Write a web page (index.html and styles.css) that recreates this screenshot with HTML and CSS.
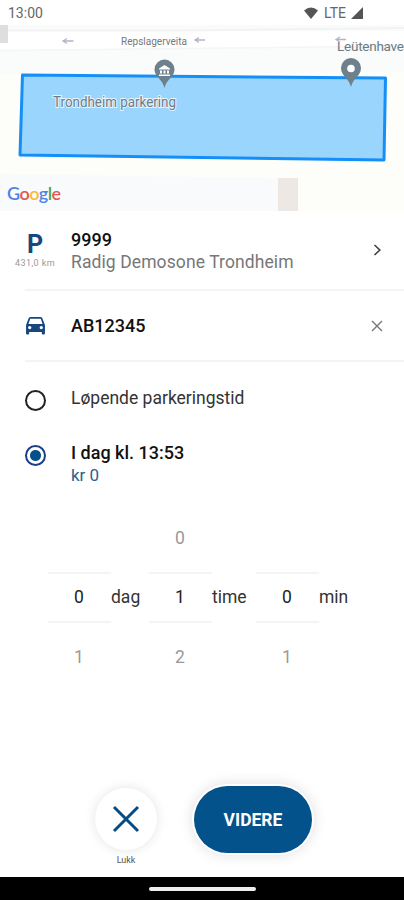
FILE: index.html
```html
<!DOCTYPE html>
<html lang="no">
<head>
  <meta charset="UTF-8" />
  <meta name="viewport" content="width=device-width, initial-scale=1.0"/>
  <title>Parkering</title>
  <link rel="stylesheet" href="styles.css">
</head>
<body>
  <div class="map">
    <svg class="map-canvas" width="404" height="211" viewBox="0 0 404 211">
      <rect width="404" height="211" fill="#fdfdf9"/>
      <path d="M0 25H404V72L0 74Z" fill="#fafbfb"/>
      <path d="M0 31H404V46L0 50Z" fill="#fff"/>
      <path d="M8 30.500H180L404 28" fill="none" stroke="#f3f3f3" stroke-width="2"/>
      <path d="M0 50.500L404 46" fill="none" stroke="#f4f5f6" stroke-width="1.500"/>
      <rect y="25" width="8" height="18" fill="#dedede"/>
      <path d="M0 174L278 178V211H0Z" fill="#f9fafb"/>
      <rect x="278" y="178" width="20" height="33" fill="#ede8e4"/>
      <path d="M22.500 75L385.500 78L384 160L20 155Z" fill="#99d5fd" stroke="#148ff8" stroke-width="3" stroke-linejoin="round"/>
      <g fill="none" stroke="#b5b5c3" stroke-width="1.300">
        <path d="M73.500 41H63M67 38.500L63 41L67 43.500"/>
        <path d="M205 40H195M199 37.500L195 40L199 42.500"/>
        <path d="M346 39.500H336M340 37L336 39.500L340 42"/>
      </g>
      <g fill="#6d808b">
        <path d="M164.500 88C162.500 79 154.500 77 154.500 69.500A10 10 0 0 1 174.500 69.500C174.500 77 166.500 79 164.500 88Z"/>
        <path d="M351 87C349 78 341 76 341 68A10 10 0 0 1 361 68C361 76 353 78 351 87Z"/>
      </g>
      <circle cx="351" cy="68.500" r="3.800" fill="#fff"/>
      <path d="M159 68.500L164.500 65L170 68.500V69.500H159ZM160 70.500H162V73.500H160ZM163.500 70.500H165.500V73.500H163.500ZM167 70.500H169V73.500H167ZM159 74.500H170V76H159Z" fill="#fff"/>
      <text class="street" x="121" y="45" textLength="66">Repslagerveita</text>
      <text class="place" x="337" y="51" textLength="67">Leütenhave</text>
      <text class="zone" x="53" y="107" textLength="123" lengthAdjust="spacingAndGlyphs">Trondheim parkering</text>
      <text class="google" x="7" y="200" textLength="54"><tspan fill="#4c82e8">G</tspan><tspan fill="#e2574c">o</tspan><tspan fill="#f5bd36">o</tspan><tspan fill="#4c82e8">g</tspan><tspan fill="#45a55c">l</tspan><tspan fill="#e2574c">e</tspan></text>
    </svg>
    <div class="status-bar">
      <span class="clock">13:00</span>
      <svg width="14" height="12" viewBox="0 0 14 12"><path d="M0 3.500Q7 -2.500 14 3.500L7 12Z" fill="#555"/></svg>
      <span class="network">LTE</span>
      <svg width="12" height="12" viewBox="0 0 12 12"><path d="M12 0V12H0Z" fill="#555"/></svg>
    </div>
  </div>

  <div class="row zone-row">
    <div class="row-icon">
      <span class="p-icon">P</span>
      <span class="distance">431,0 km</span>
    </div>
    <div class="row-text">
      <div class="title">9999</div>
      <div class="subtitle">Radig Demosone Trondheim</div>
    </div>
    <svg class="row-action" width="14" height="14" viewBox="0 0 14 14"><path d="M4.500 2L9.800 7L4.500 12" fill="none" stroke="#444" stroke-width="1.700"/></svg>
  </div>

  <div class="row car-row">
    <div class="row-icon">
      <svg width="21" height="18" viewBox="0 0 20 18" preserveAspectRatio="none"><path fill="#17477f" fill-rule="evenodd" d="M3.500 1.300Q4 0 5.500 0H14.500Q16 0 16.500 1.300L19 8V16.500Q19 17.500 18 17.500H17Q16 17.500 16 16.500V15H4V16.500Q4 17.500 3 17.500H2Q1 17.500 1 16.500V8ZM5 1.800L3.300 7H16.700L15 1.800ZM4.500 9A1.600 1.600 0 1 0 4.500 12.200A1.600 1.600 0 1 0 4.500 9ZM15.500 9A1.600 1.600 0 1 0 15.500 12.200A1.600 1.600 0 1 0 15.500 9Z"/></svg>
    </div>
    <div class="row-text title">AB12345</div>
    <svg class="row-action" width="14" height="14" viewBox="0 0 14 14"><path d="M2 2L12 12M12 2L2 12" fill="none" stroke="#777" stroke-width="1.400"/></svg>
  </div>

  <div class="options">
    <div class="option">
      <span class="radio"></span>
      <div class="option-label">Løpende parkeringstid</div>
    </div>
    <div class="option">
      <span class="radio checked"></span>
      <div>
        <div class="title">I dag kl. 13:53</div>
        <div class="price">kr 0</div>
      </div>
    </div>
  </div>

  <div class="picker">
    <div class="wheel">
      <span></span>
      <span class="current">0</span>
      <span>1</span>
    </div>
    <div class="unit day">dag</div>
    <div class="wheel">
      <span>0</span>
      <span class="current">1</span>
      <span>2</span>
    </div>
    <div class="unit hour">time</div>
    <div class="wheel">
      <span></span>
      <span class="current">0</span>
      <span>1</span>
    </div>
    <div class="unit">min</div>
  </div>

  <div class="actions">
    <div class="close">
      <div class="close-btn">
        <svg width="28" height="28" viewBox="0 0 28 28"><path d="M2 2L26 26M26 2L2 26" fill="none" stroke="#074b84" stroke-width="3"/></svg>
      </div>
      <span class="close-label">Lukk</span>
    </div>
    <div class="next-btn">VIDERE</div>
  </div>

  <div class="nav-bar"><div class="nav-handle"></div></div>
</body>
</html>
```

FILE: styles.css
```css
* {
  box-sizing: border-box;
}
body {
  margin: 0;
  height: 900px;
  display: flex;
  flex-direction: column;
  overflow: hidden;
  background: #fff;
  color: #111;
  font-family: Roboto, sans-serif;
  font-size: 17.5px;
}
svg {
  display: block;
  flex-shrink: 0;
}
.map {
  position: relative;
  height: 211px;
}
.street {
  font-size: 10px;
  fill: #777;
}
.place {
  font-size: 13.5px;
  fill: #6b7a83;
}
.zone {
  font-size: 14px;
  fill: #6d7c88;
  stroke: #e8f4fc;
  stroke-width: 2px;
  paint-order: stroke;
}
.google {
  font-family: Lato, sans-serif;
  font-size: 18px;
  font-weight: 600;
}
.status-bar {
  position: absolute;
  top: 0;
  left: 0;
  width: 404px;
  height: 25px;
  padding: 0 41px 0 8px;
  display: flex;
  align-items: center;
  background: #fff;
  color: #666;
}
.clock {
  margin-right: auto;
  font-size: 14px;
}
.network {
  margin: 0 5px 0 6px;
  font-size: 14px;
}
.row {
  display: flex;
  margin-left: 25px;
  border-bottom: 2px solid #f4f4f4;
}
.zone-row {
  height: 80px;
}
.car-row {
  height: 71px;
  align-items: center;
}
.row-icon {
  width: 46px;
  flex-shrink: 0;
}
.row-text {
  flex: 1;
}
.row-action {
  margin-right: 20px;
}
.zone-row .row-icon {
  display: flex;
  flex-direction: column;
  align-items: center;
  width: 20px;
  margin-right: 26px;
  padding-top: 19px;
}
.zone-row .row-text {
  padding-top: 18px;
}
.zone-row .row-action {
  margin-top: 32px;
}
.p-icon {
  color: #17477f;
  font-size: 25px;
  font-weight: 700;
  line-height: 29px;
}
.distance {
  color: #999;
  font-size: 9px;
  letter-spacing: 0.4px;
  line-height: 9px;
  white-space: nowrap;
}
.title {
  font-size: 18px;
  font-weight: 500;
  line-height: 22px;
}
.subtitle {
  color: #777;
  letter-spacing: 0.1px;
  line-height: 22px;
}
.options {
  height: 142px;
  padding: 25px 0 0 25px;
}
.option {
  display: flex;
  height: 55px;
  line-height: 23px;
}
.option-label {
  color: #333;
}
.radio {
  width: 21px;
  height: 21px;
  margin: 3px 25px 0 0;
  border: 2px solid #222;
  border-radius: 50%;
}
.radio.checked {
  border-color: #1b3f83;
  background: radial-gradient(circle, #075089 5px, #fff 6px);
}
.price {
  color: #2c618f;
  font-size: 17px;
}
.picker {
  display: flex;
  align-items: center;
  height: 178px;
  margin: 4px 0 0 48px;
}
.wheel {
  width: 63px;
}
.wheel span {
  display: flex;
  align-items: center;
  justify-content: center;
  height: 68px;
  padding-right: 1px;
  color: #999;
}
.wheel .current {
  height: 51px;
  border: solid #f4f4f4;
  border-width: 2px 0;
  color: #222;
}
.unit {
  color: #333;
}
.day {
  width: 38px;
}
.hour {
  width: 44px;
}
.actions {
  display: flex;
  margin: 100px 0 0 95px;
}
.close {
  width: 62px;
  padding-top: 2px;
  display: flex;
  flex-direction: column;
  align-items: center;
}
.close-btn {
  display: flex;
  align-items: center;
  justify-content: center;
  width: 62px;
  height: 62px;
  border-radius: 50%;
  background: #fff;
  box-shadow: 0 0 12px rgba(0,0,0,0.11);
}
.close-label {
  margin-top: 5px;
  color: #555;
  font-size: 9px;
}
.next-btn {
  width: 118px;
  height: 67px;
  margin-left: 37px;
  border-radius: 34px;
  background: #03528b;
  box-shadow: 0 0 0 2px #fff, 0 0 14px 2px rgba(0,0,0,0.13);
  color: #fff;
  font-size: 17.5px;
  font-weight: 700;
  line-height: 68px;
  text-align: center;
}
.nav-bar {
  display: flex;
  justify-content: center;
  align-items: center;
  height: 23px;
  margin-top: auto;
  background: #000;
}
.nav-handle {
  width: 107px;
  height: 4px;
  border-radius: 2px;
  background: #eee;
}
```
